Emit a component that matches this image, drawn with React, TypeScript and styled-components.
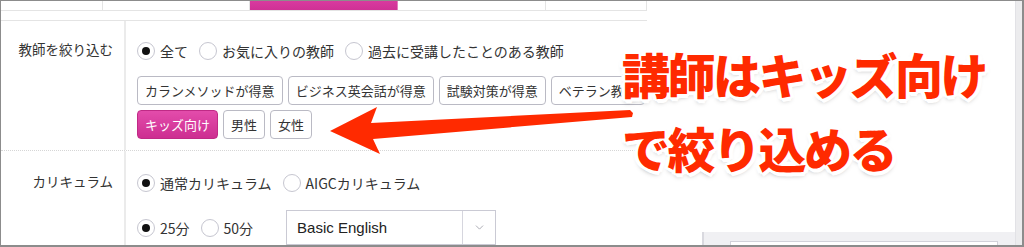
import { createGlobalStyle, styled } from 'styled-components'
import { ChevronDown } from 'lucide-react'

const GlobalStyle = createGlobalStyle`
  html, body {
    margin: 0;
    padding: 0;
    background: #fff;
  }
  body {
    font-family: 'Noto Sans CJK JP', 'Noto Sans', sans-serif;
    color: #333;
  }
  * {
    box-sizing: border-box;
  }
`

const Frame = styled.div`
  position: relative;
  width: 1024px;
  height: 247px;
  overflow: hidden;
  display: flex;
  background: #fff;
  border-style: solid;
  border-color: #8c8c8c;
  border-width: 1px 2px 2px 1px;
`

const Content = styled.div`
  width: 646px;
  flex-shrink: 0;
  display: flex;
  flex-direction: column;
`

const TabStrip = styled.div`
  display: flex;
  height: 11px;
  border-bottom: 1px solid #e4e4e4;
`

const Tab = styled.div<{ $w?: number; $active?: boolean }>`
  width: ${(p) => (p.$w ? `${p.$w}px` : 'auto')};
  flex: ${(p) => (p.$w ? 'none' : '1')};
  border-right: 1px solid ${(p) => (p.$active ? '#e27cbd' : '#e4e4e4')};
  background: ${(p) => (p.$active ? 'linear-gradient(#d83a9f, #cf3195)' : '#fff')};
`

const SubBar = styled.div`
  height: 11px;
  border-bottom: 1px solid #e4e4e4;
`

const FilterRow = styled.div<{ $dotted?: boolean }>`
  display: grid;
  grid-template-columns: 125px 1fr;
  border-bottom: ${(p) => (p.$dotted ? '1px dotted #d6d6d6' : 'none')};
`

const Label = styled.div<{ $top: number }>`
  border-right: 2px solid #ebebeb;
  padding: ${(p) => p.$top}px 11px 0 0;
  text-align: right;
  font-size: 13.5px;
  line-height: 24px;
  color: #333;
`

const Values = styled.div<{ $top: number; $bottom: number }>`
  padding: ${(p) => p.$top}px 0 ${(p) => p.$bottom}px 11px;
  display: flex;
  flex-direction: column;
`

const RadioLine = styled.div<{ $mt?: number; $h?: number }>`
  display: flex;
  align-items: center;
  height: ${(p) => p.$h ?? 24}px;
  margin-top: ${(p) => p.$mt ?? 0}px;
`

const Option = styled.label`
  display: inline-flex;
  align-items: center;
  gap: 5px;
  margin-right: 11px;
  font-size: 14px;
  line-height: 24px;
  color: #333;
  white-space: nowrap;
`

const RadioCircle = styled.span<{ $checked?: boolean }>`
  width: 18px;
  height: 18px;
  border-radius: 50%;
  border: 1px solid #c6c6d0;
  background: #fff;
  display: flex;
  align-items: center;
  justify-content: center;

  &::after {
    content: '';
    display: ${(p) => (p.$checked ? 'block' : 'none')};
    width: 8px;
    height: 8px;
    border-radius: 50%;
    background: #111;
  }
`

const TagRow = styled.div<{ $mt: number }>`
  display: flex;
  gap: 5px;
  margin-top: ${(p) => p.$mt}px;
`

const Tag = styled.span<{ $active?: boolean }>`
  height: 29px;
  padding: 0 7px;
  display: inline-flex;
  align-items: center;
  font-size: 13px;
  white-space: nowrap;
  border-radius: 4px;
  border: 1px solid ${(p) => (p.$active ? '#c02a86' : '#babac4')};
  background: ${(p) => (p.$active ? 'linear-gradient(#e34cab, #cd2e91)' : '#fff')};
  color: ${(p) => (p.$active ? '#fff' : '#333')};
`

const Select = styled.div`
  width: 210px;
  height: 35px;
  margin-left: 22px;
  display: flex;
  border: 1px solid #cacad4;
  background: #fff;
`

const SelectValue = styled.span`
  flex: 1;
  padding-left: 10px;
  display: flex;
  align-items: center;
  font-family: 'Liberation Sans', Arial, sans-serif;
  font-size: 15px;
  color: #222;
`

const SelectCaret = styled.span`
  width: 33px;
  border-left: 1px solid #d6d6de;
  display: flex;
  align-items: center;
  justify-content: center;
  color: #9a9aa4;
`

const Aside = styled.div`
  flex: 1;
  display: flex;
  flex-direction: column;
  justify-content: flex-end;
  padding-left: 55px;
`

const SidePanel = styled.div`
  height: 13px;
  padding: 9px 17px 0 26px;
  background: #f0f0f3;
  border-left: 2px solid #d9d9df;
`

const SideBox = styled.div`
  height: 100%;
  background: #fff;
  border: 1px solid #d2d2da;
  border-bottom: none;
`

const ScrollTrack = styled.div`
  width: 7px;
  background: #ececee;
  border-left: 1px solid #e2e2e6;
`

const Callout = styled.div`
  position: absolute;
  left: 621px;
  top: 35px;
  font-size: 48px;
  font-weight: 900;
  line-height: 74px;
  letter-spacing: -2.5px;
  color: #ff2a00;
  white-space: nowrap;
  text-shadow:
    3px 0 0 #fff, -3px 0 0 #fff, 0 3px 0 #fff, 0 -3px 0 #fff,
    2px 2px 0 #fff, -2px 2px 0 #fff, 2px -2px 0 #fff, -2px -2px 0 #fff,
    4px 1px 0 #fff, -4px 1px 0 #fff, 1px 4px 0 #fff, 1px -4px 0 #fff,
    0 3px 5px rgba(0, 0, 0, 0.35);
`

const ArrowLayer = styled.svg`
  position: absolute;
  left: -1px;
  top: -1px;
  width: 1024px;
  height: 247px;
  pointer-events: none;
`

const firstTags = ['カランメソッドが得意', 'ビジネス英会話が得意', '試験対策が得意', 'ベテラン教師']
const secondTags = ['キッズ向け', '男性', '女性']

function Radio({ label, checked }: { label: string; checked?: boolean }) {
  return (
    <Option>
      <RadioCircle $checked={checked} />
      {label}
    </Option>
  )
}

export default function App() {
  return (
    <>
      <GlobalStyle />
      <Frame>
        <Content>
          <TabStrip>
            <Tab $w={102} />
            <Tab $w={147} />
            <Tab $w={148} $active />
            <Tab $w={148} />
            <Tab />
          </TabStrip>
          <SubBar />

          <FilterRow $dotted>
            <Label $top={16}>教師を絞り込む</Label>
            <Values $top={18} $bottom={11}>
              <RadioLine>
                <Radio label="全て" checked />
                <Radio label="お気に入りの教師" />
                <Radio label="過去に受講したことのある教師" />
              </RadioLine>
              <TagRow $mt={13}>
                {firstTags.map((t) => (
                  <Tag key={t}>{t}</Tag>
                ))}
              </TagRow>
              <TagRow $mt={5}>
                {secondTags.map((t, i) => (
                  <Tag key={t} $active={i === 0}>
                    {t}
                  </Tag>
                ))}
              </TagRow>
            </Values>
          </FilterRow>

          <FilterRow>
            <Label $top={18}>カリキュラム</Label>
            <Values $top={20} $bottom={0}>
              <RadioLine>
                <Radio label="通常カリキュラム" checked />
                <Radio label="AIGCカリキュラム" />
              </RadioLine>
              <RadioLine $mt={15} $h={35}>
                <Radio label="25分" checked />
                <Radio label="50分" />
                <Select>
                  <SelectValue>Basic English</SelectValue>
                  <SelectCaret>
                    <ChevronDown size={13} strokeWidth={1.5} />
                  </SelectCaret>
                </Select>
              </RadioLine>
            </Values>
          </FilterRow>
        </Content>

        <Aside>
          <SidePanel>
            <SideBox />
          </SidePanel>
        </Aside>
        <ScrollTrack />

        <ArrowLayer viewBox="0 0 1024 247">
          <polygon
            points="330,131 377,107 371,123 630,110 633,113 632,117 373,139 380,154"
            fill="#ff2a00"
          />
        </ArrowLayer>

        <Callout>
          講師はキッズ向け
          <br />
          で絞り込める
        </Callout>
      </Frame>
    </>
  )
}
